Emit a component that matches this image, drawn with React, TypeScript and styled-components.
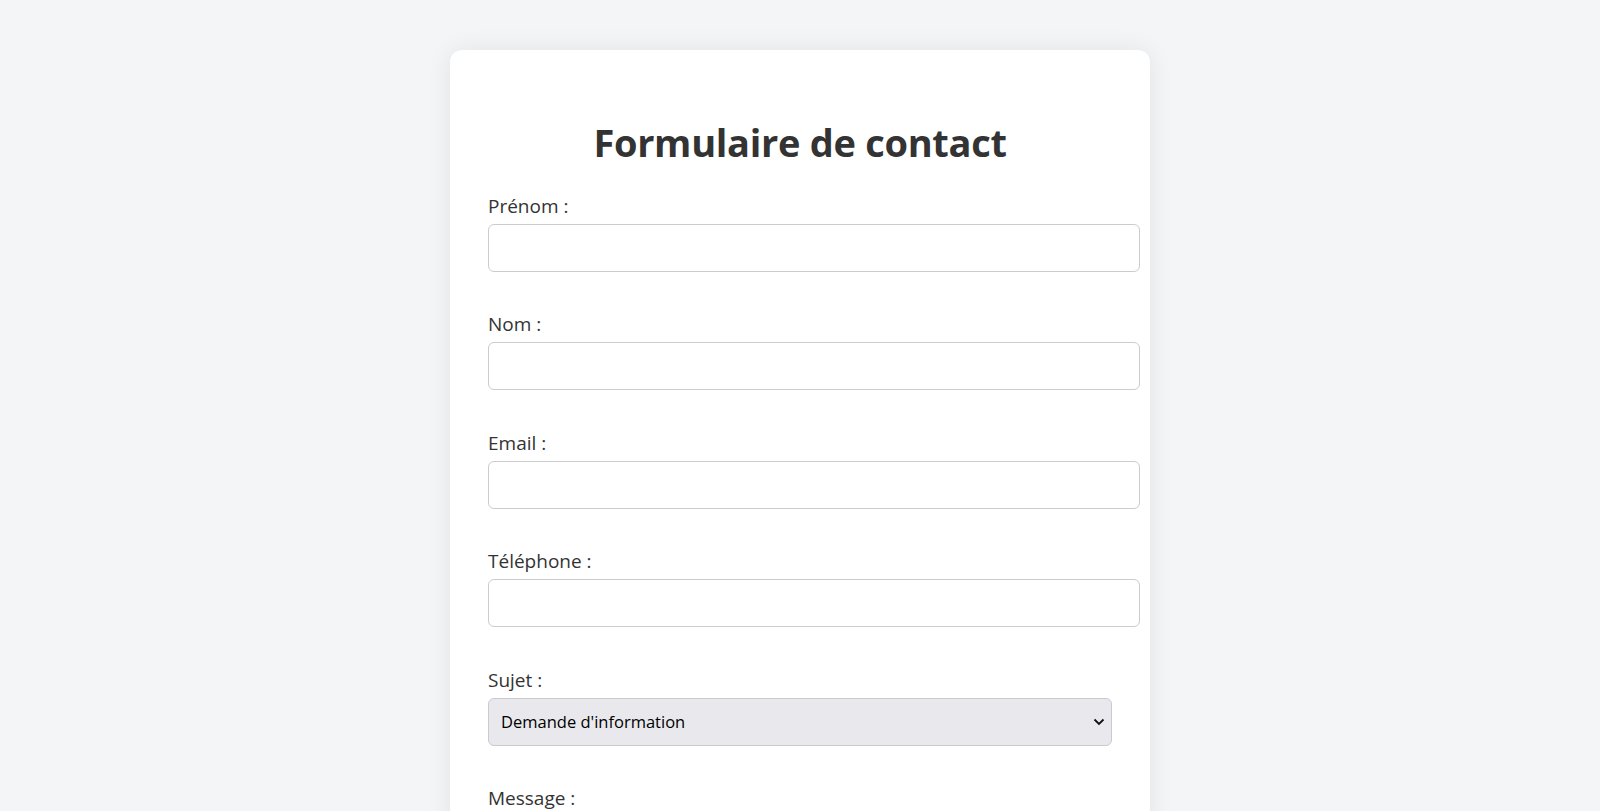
import React from "react";
import styled, { createGlobalStyle } from "styled-components";

const GlobalStyle = createGlobalStyle`
  html, body {
    margin: 0;
    padding: 0;
    background: #f4f5f7;
    font-family: "Open Sans", "Noto Sans", "Liberation Sans", sans-serif;
    color: #333333;
  }
  * { box-sizing: border-box; }
`;

const Page = styled.div`
  display: flex;
  justify-content: center;
  padding-top: 50px;
  min-height: 811px;
`;

const Card = styled.form`
  width: 700px;
  background: #ffffff;
  border-radius: 12px;
  box-shadow: 0 0 24px rgba(0, 0, 0, 0.08);
  padding: 40px 38px 40px;
  align-self: flex-start;
`;

const Title = styled.h2`
  margin: 30px 0 27px;
  text-align: center;
  font-size: 38px;
  font-weight: 700;
  line-height: 1.2;
  color: #333333;
  letter-spacing: -0.3px;
`;

const Field = styled.div`
  display: flex;
  flex-direction: column;
  margin-bottom: 39.5px;
`;

const Label = styled.label`
  display: block;
  font-size: 19px;
  line-height: 27px;
  margin-bottom: 4px;
  color: #333333;
`;

const Input = styled.input`
  width: calc(100% + 28px);
  height: 48px;
  border: 1px solid #cccccc;
  border-radius: 6px;
  background: #ffffff;
  padding: 0 12px;
  font-size: 18px;
  font-family: inherit;
  outline: none;
`;

const SelectWrap = styled.div`
  position: relative;
  width: 100%;
`;

const Select = styled.select`
  width: 100%;
  height: 48px;
  appearance: none;
  -webkit-appearance: none;
  background: #e9e9ed;
  border: 1px solid #c9c9cf;
  border-radius: 6px;
  padding: 0 12px;
  font-size: 16.5px;
  font-family: "Open Sans", "Noto Sans", sans-serif;
  color: #000000;
  outline: none;
`;

const Chevron = styled.svg`
  position: absolute;
  right: 7px;
  top: 50%;
  transform: translateY(-50%);
  pointer-events: none;
`;

const fields = ["Prénom", "Nom", "Email", "Téléphone"];

export default function App() {
  return (
    <>
      <GlobalStyle />
      <Page>
        <Card onSubmit={(e) => e.preventDefault()}>
          <Title>Formulaire de contact</Title>
          {fields.map((f) => (
            <Field key={f}>
              <Label>{f} :</Label>
              <Input type="text" />
            </Field>
          ))}
          <Field>
            <Label>Sujet :</Label>
            <SelectWrap>
              <Select defaultValue="info">
                <option value="info">Demande d'information</option>
                <option value="support">Support</option>
                <option value="autre">Autre</option>
              </Select>
              <Chevron width="12" height="8" viewBox="0 0 12 8">
                <path d="M1.5 1.5 L6 6 L10.5 1.5" fill="none" stroke="#111" strokeWidth="1.8" />
              </Chevron>
            </SelectWrap>
          </Field>
          <Field>
            <Label>Message :</Label>
          </Field>
        </Card>
      </Page>
    </>
  );
}
